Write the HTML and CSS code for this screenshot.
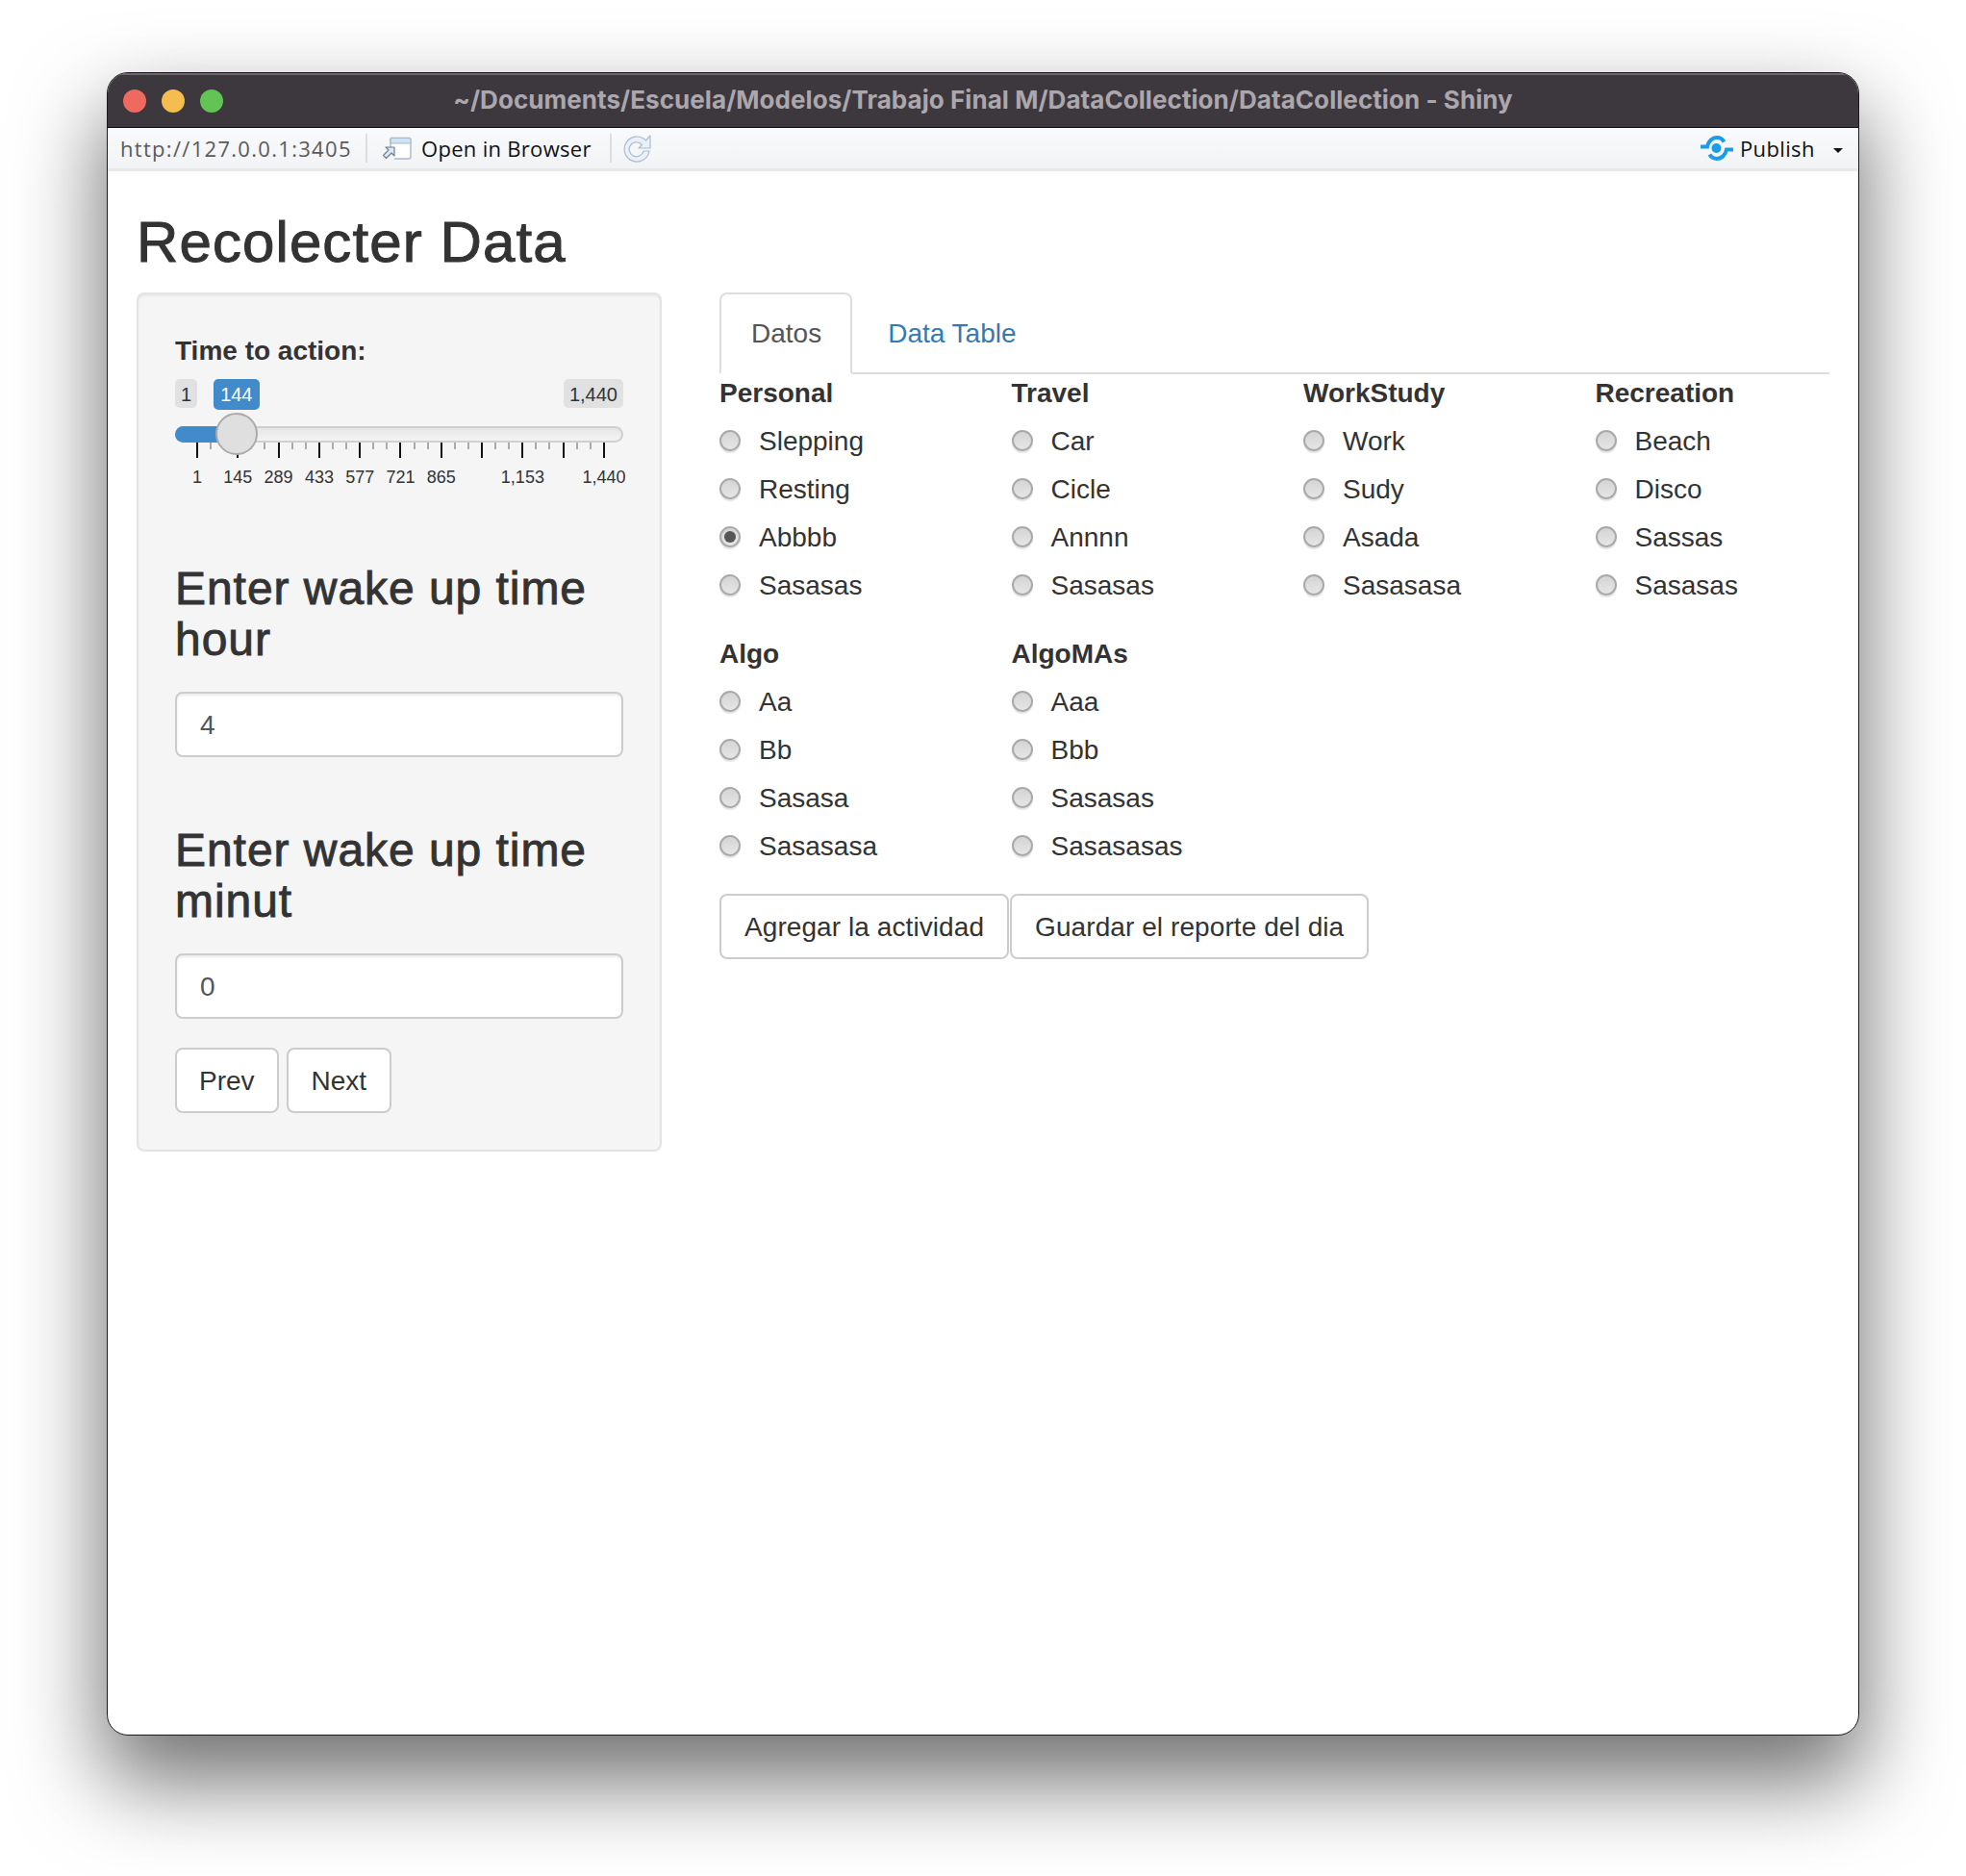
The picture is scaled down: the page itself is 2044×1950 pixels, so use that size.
FILE: index.html
```html
<!DOCTYPE html>
<html lang="es">
<head>
<meta charset="utf-8">
<title>Recolecter Data</title>
<link rel="stylesheet" href="styles.css">
</head>
<body>
<div class="window">
  <header class="titlebar">
    <div class="lights"><span class="light red"></span><span class="light yellow"></span><span class="light green"></span></div>
    <div class="title">~/Documents/Escuela/Modelos/Trabajo Final M/DataCollection/DataCollection - Shiny</div>
  </header>
  <div class="toolbar">
    <span class="url">http://127.0.0.1:3405</span>
    <span class="sep"></span>
    <svg class="ico-open" width="32" height="24" viewBox="0 0 32 24"><path d="M9 1.5h19a2 2 0 0 1 2 2v18a1.500 1.500 0 0 1-1.500 1.500H13" fill="#fff" stroke="#a9b8c6" stroke-width="1.400"/><path d="M9 1.500h19a2 2 0 0 1 2 2V7H9z" fill="#cfe3f6" stroke="#a9b8c6" stroke-width="1"/><path d="M9 2v10" stroke="#a9b8c6" stroke-width="1.400"/><path d="M4 11h9v9l-3-3-5.500 5.500-3-3L7 14z" fill="#dfe9f2" stroke="#6f8090" stroke-width="1.200" stroke-linejoin="round"/></svg>
    <span class="open">Open in Browser</span>
    <span class="sep"></span>
    <svg class="ico-refresh" width="30" height="30" viewBox="0 0 30 30"><path d="M24.500 7A13 13 0 1 0 28 18h-6a7.500 7.500 0 1 1-1.500-6.500L17 15h12V2z" fill="#e9f0f8" stroke="#a9bcd1" stroke-width="1.200" stroke-linejoin="round"/></svg>
    <span class="spacer"></span>
    <svg class="ico-publish" width="34" height="28" viewBox="0 0 34 28"><circle cx="16.500" cy="14" r="5" fill="#1c9ce8"/><path d="M0 12.500h7C8 7 12 3 17 3c3.500 0 6 1.500 7.500 4.500" fill="none" stroke="#1c9ce8" stroke-width="4"/><path d="M34 15.500h-7C26 21 22 25 17 25c-3.500 0-6-1.500-7.500-4.500" fill="none" stroke="#1c9ce8" stroke-width="4"/></svg>
    <span class="publish">Publish</span>
    <span class="caret"></span>
  </div>
  <main class="content">
    <h2 class="page-title">Recolecter Data</h2>
    <div class="layout">
      <aside class="well">
        <label class="field-label">Time to action:</label>
        <div class="slider">
          <div class="badges">
            <span class="badge">1</span>
            <span class="badge badge-from">144</span>
            <span class="badge badge-max">1,440</span>
          </div>
          <div class="track">
            <div class="track-fill"></div>
            <div class="handle"></div>
          </div>
          <div class="ticks">
            <i class="maj"></i><i></i><i></i><i class="maj"></i><i></i><i></i><i class="maj"></i><i></i><i></i><i class="maj"></i><i></i><i></i><i class="maj"></i><i></i><i></i><i class="maj"></i><i></i><i></i><i class="maj"></i><i></i><i></i><i class="maj"></i><i></i><i></i><i class="maj"></i><i></i><i></i><i class="maj"></i><i></i><i></i><i class="maj"></i>
          </div>
          <div class="scale">
            <span><b>1</b></span><span><b>145</b></span><span><b>289</b></span><span><b>433</b></span><span><b>577</b></span><span><b>721</b></span><span><b>865</b></span><span></span><span><b>1,153</b></span><span></span><span><b>1,440</b></span>
          </div>
        </div>
        <h3 class="input-title">Enter wake up time hour</h3>
        <input class="text-input" type="text" value="4">
        <h3 class="input-title">Enter wake up time minut</h3>
        <input class="text-input" type="text" value="0">
        <div class="pager">
          <button class="btn">Prev</button>
          <button class="btn">Next</button>
        </div>
      </aside>
      <section class="main-panel">
        <nav class="tabs">
          <a class="tab active">Datos</a>
          <a class="tab">Data Table</a>
        </nav>
        <div class="radio-grid">
          <div class="group">
            <div class="group-label">Personal</div>
            <label class="radio"><span class="dot"></span>Slepping</label>
            <label class="radio"><span class="dot"></span>Resting</label>
            <label class="radio"><span class="dot on"></span>Abbbb</label>
            <label class="radio"><span class="dot"></span>Sasasas</label>
          </div>
          <div class="group">
            <div class="group-label">Travel</div>
            <label class="radio"><span class="dot"></span>Car</label>
            <label class="radio"><span class="dot"></span>Cicle</label>
            <label class="radio"><span class="dot"></span>Annnn</label>
            <label class="radio"><span class="dot"></span>Sasasas</label>
          </div>
          <div class="group">
            <div class="group-label">WorkStudy</div>
            <label class="radio"><span class="dot"></span>Work</label>
            <label class="radio"><span class="dot"></span>Sudy</label>
            <label class="radio"><span class="dot"></span>Asada</label>
            <label class="radio"><span class="dot"></span>Sasasasa</label>
          </div>
          <div class="group">
            <div class="group-label">Recreation</div>
            <label class="radio"><span class="dot"></span>Beach</label>
            <label class="radio"><span class="dot"></span>Disco</label>
            <label class="radio"><span class="dot"></span>Sassas</label>
            <label class="radio"><span class="dot"></span>Sasasas</label>
          </div>
          <div class="group">
            <div class="group-label">Algo</div>
            <label class="radio"><span class="dot"></span>Aa</label>
            <label class="radio"><span class="dot"></span>Bb</label>
            <label class="radio"><span class="dot"></span>Sasasa</label>
            <label class="radio"><span class="dot"></span>Sasasasa</label>
          </div>
          <div class="group">
            <div class="group-label">AlgoMAs</div>
            <label class="radio"><span class="dot"></span>Aaa</label>
            <label class="radio"><span class="dot"></span>Bbb</label>
            <label class="radio"><span class="dot"></span>Sasasas</label>
            <label class="radio"><span class="dot"></span>Sasasasas</label>
          </div>
        </div>
        <div class="actions">
          <button class="btn">Agregar la actividad</button>
          <button class="btn">Guardar el reporte del dia</button>
        </div>
      </section>
    </div>
  </main>
</div>
</body>
</html>
```

FILE: styles.css
```css
* { box-sizing: border-box; }
html, body { margin: 0; background: #fff; }
body {
  height: 1950px;
  padding: 75px 111px 0;
  overflow: hidden;
  font-family: "Liberation Sans", Arial, sans-serif;
  color: #333;
}
.window {
  width: 1822px;
  height: 1729px;
  border: 1px solid #1c1a1d;
  border-radius: 22px;
  background: #fff;
  overflow: hidden;
  display: flex;
  flex-direction: column;
  box-shadow: 0 44px 90px 4px rgba(0, 0, 0, .56);
}

/* title bar */
.titlebar {
  position: relative;
  height: 57px;
  flex: none;
  padding-bottom: 3px;
  background: #3d383e;
  border-top: 2px solid #6a666c;
  border-bottom: 1px solid #0f0e10;
  display: flex;
  align-items: center;
  justify-content: center;
}
.lights {
  position: absolute;
  left: 16px;
  top: 15px;
  display: flex;
  gap: 16px;
}
.light { width: 24px; height: 24px; border-radius: 50%; }
.red { background: #ee6a5f; }
.yellow { background: #f5bd4f; }
.green { background: #61c454; }
.title {
  color: #aca7ad;
  font-family: Inter, "Liberation Sans", sans-serif;
  font-size: 26px;
  font-weight: 700;
  letter-spacing: .06px;
  white-space: nowrap;
}

/* tool bar */
.toolbar {
  height: 45px;
  flex: none;
  display: flex;
  align-items: center;
  padding: 0 0 1px 13px;
  background: linear-gradient(#f9fafb, #f1f3f5);
  border-bottom: 3px solid #e6e8ea;
  font-family: "Open Sans", sans-serif;
  font-size: 22px;
  color: #111;
}
.url { color: #5b5b5b; width: 255px; letter-spacing: 1.3px; white-space: nowrap; }
.sep { width: 2px; height: 30px; background: #dcdfe2; }
.ico-open { margin-left: 15px; }
.open { margin-left: 9px; width: 196px; letter-spacing: .3px; white-space: nowrap; }
.ico-refresh { margin-left: 11px; }
.spacer { flex: 1; }
.ico-publish { margin-right: 7px; }
.publish { width: 97px; letter-spacing: .35px; }
.caret {
  width: 0;
  height: 0;
  margin: 6px 16px 0 0;
  border-left: 5.500px solid transparent;
  border-right: 5.500px solid transparent;
  border-top: 5.500px solid #111;
}

/* page */
.content { padding: 0 30px; font-size: 28px; line-height: 40px; }
.page-title {
  margin: 41px 0 19px;
  font-size: 60px;
  line-height: 66px;
  font-weight: 400;
  letter-spacing: 1.1px;
  -webkit-text-stroke: 1px #333;
}
.layout {
  display: grid;
  grid-template-columns: 546px 1fr;
  column-gap: 60px;
  align-items: start;
}

/* sidebar */
.well {
  height: 893px;
  padding: 39px 38px 38px;
  background: #f5f5f5;
  border: 2px solid #e3e3e3;
  border-radius: 8px;
  box-shadow: inset 0 2px 2px rgba(0, 0, 0, .05);
}
.field-label { display: block; font-weight: 700; margin-bottom: 9px; }
.slider { height: 121px; }
.badges { display: flex; height: 30px; font-size: 20px; line-height: 32px; }
.badge {
  padding: 0 6px;
  height: 30px;
  background: #e1e1e1;
  border-radius: 5px;
  color: #333;
}
.badge-from {
  height: 32px;
  padding: 0 7px;
  margin-left: 17px;
  background: #428bca;
  color: #fff;
}
.badge-max { margin-left: auto; }
.track {
  position: relative;
  height: 17px;
  margin-top: 19px;
  background: linear-gradient(#e6e6e6, #f4f4f4);
  border: 2px solid #cfcfcf;
  border-radius: 9px;
}
.track-fill {
  position: absolute;
  left: -2px;
  top: -2px;
  bottom: -2px;
  width: 50px;
  background: #428bca;
  border-radius: 9px 0 0 9px;
}
.handle {
  position: absolute;
  left: 40px;
  top: -16px;
  width: 44px;
  height: 44px;
  background: #dfdfdf;
  border: 2px solid #ababab;
  border-radius: 50%;
}
.ticks {
  display: flex;
  justify-content: space-between;
  align-items: flex-start;
  height: 16px;
  margin: 0 19px 0 22px;
}
.ticks i { width: 2px; height: 7px; background: #aaa; }
.ticks .maj { height: 16px; background: #111; }
.scale {
  display: flex;
  justify-content: space-between;
  margin: 8px 20px 0 23px;
  font-size: 18px;
  line-height: 24px;
}
.scale span { width: 0; display: flex; justify-content: center; }
.scale b { font-weight: 400; white-space: nowrap; }
.input-title {
  margin: 70px 0 28px;
  font-size: 48px;
  line-height: 53px;
  font-weight: 400;
  letter-spacing: .95px;
  -webkit-text-stroke: .9px #333;
}
.text-input {
  display: block;
  width: 100%;
  height: 68px;
  padding: 1px 24px 0;
  border: 2px solid #ccc;
  border-radius: 8px;
  background: #fff;
  box-shadow: inset 0 2px 2px rgba(0, 0, 0, .075);
  font: 28px "Liberation Sans", Arial, sans-serif;
  color: #555;
}
.pager { display: flex; gap: 8px; margin-top: 30px; }
.pager .btn { padding: 2px 23px 0; }
.pager .btn:last-child { padding: 2px 24px 0; }
.btn {
  height: 68px;
  padding: 0 24px;
  background: #fff;
  border: 2px solid #ccc;
  border-radius: 8px;
  font: 28px "Liberation Sans", Arial, sans-serif;
  color: #333;
}

/* tabs */
.tabs { display: flex; gap: 4px; height: 85px; border-bottom: 2px solid #ddd; }
.tab {
  height: 85px;
  padding: 21px 30px 0 31px;
  border: 2px solid transparent;
  border-radius: 8px 8px 0 0;
  color: #337ab7;
}
.tab.active {
  color: #555;
  background: #fff;
  border-color: #ddd;
  border-bottom-color: #fff;
}

/* radios */
.radio-grid {
  display: grid;
  grid-template-columns: repeat(4, 1fr);
  column-gap: 60px;
  row-gap: 31px;
}
.group-label { font-weight: 700; margin-bottom: 10px; }
.radio { display: flex; align-items: center; height: 40px; margin-bottom: 10px; }
.radio:last-child { margin-bottom: 0; }
.dot {
  width: 22px;
  height: 22px;
  margin: 0 19px 2px 0;
  flex: none;
  border: 2px solid #a9a9a9;
  border-radius: 50%;
  background: linear-gradient(#d4d4d4, #e6e6e6);
  box-shadow: 0 2px 1px #e4e4e4;
  position: relative;
}
.dot.on::after {
  content: "";
  position: absolute;
  inset: 3px;
  border-radius: 50%;
  background: #555;
}
.actions { display: flex; gap: 1px; margin-top: 29px; }
.actions .btn { padding: 1px 24px 0; letter-spacing: .08px; }
```
